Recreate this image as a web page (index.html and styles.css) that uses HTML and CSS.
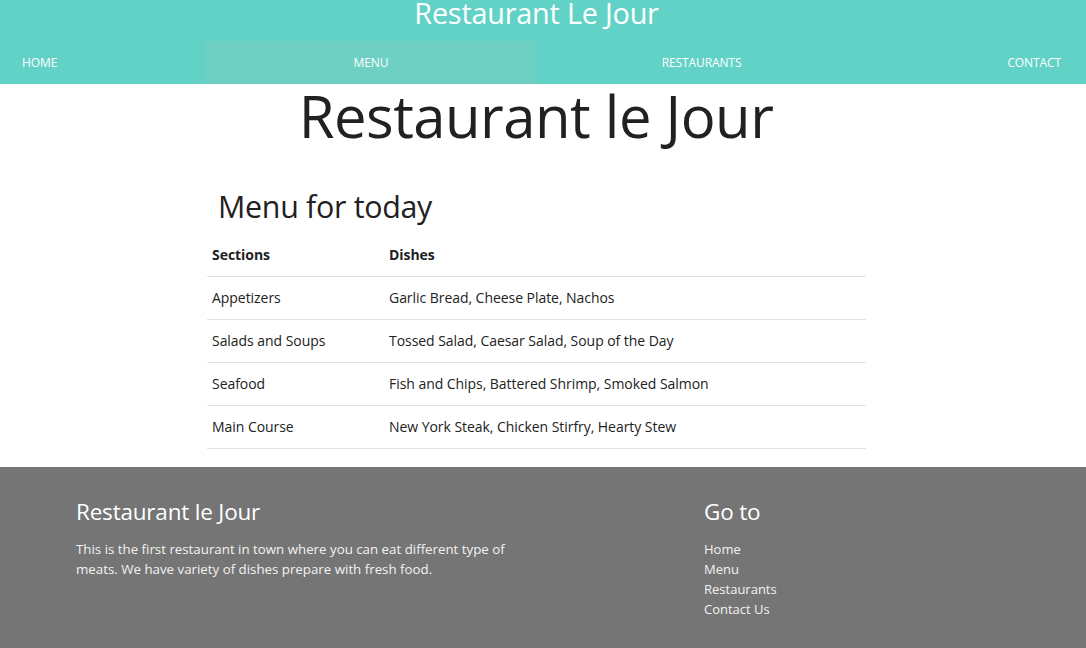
FILE: index.html
```html
<!DOCTYPE html>
<html lang="en">
<head>
<meta charset="utf-8">
<title>Restaurant Le Jour</title>
<link rel="stylesheet" href="styles.css">
</head>
<body>
<header class="site-header">
  <div class="brand">Restaurant Le Jour</div>
  <nav class="nav">
    <a class="nav-item nav-home" href="#">HOME</a>
    <a class="nav-item nav-active" href="#">MENU</a>
    <a class="nav-item" href="#">RESTAURANTS</a>
    <a class="nav-item nav-contact" href="#">CONTACT</a>
  </nav>
</header>
<main class="main">
  <h1 class="page-title">Restaurant le Jour</h1>
  <section class="menu">
    <h2 class="menu-title">Menu for today</h2>
    <table class="menu-table">
      <thead>
        <tr><th class="col-sec">Sections</th><th>Dishes</th></tr>
      </thead>
      <tbody>
        <tr><td>Appetizers</td><td>Garlic Bread, Cheese Plate, Nachos</td></tr>
        <tr><td>Salads and Soups</td><td>Tossed Salad, Caesar Salad, Soup of the Day</td></tr>
        <tr><td>Seafood</td><td>Fish and Chips, Battered Shrimp, Smoked Salmon</td></tr>
        <tr><td>Main Course</td><td>New York Steak, Chicken Stirfry, Hearty Stew</td></tr>
      </tbody>
    </table>
  </section>
</main>
<footer class="footer">
  <div class="footer-about">
    <h3 class="footer-title">Restaurant le Jour</h3>
    <p class="footer-text">This is the first restaurant in town where you can eat different type of meats. We have variety of dishes prepare with fresh food.</p>
  </div>
  <div class="footer-links">
    <h3 class="footer-title">Go to</h3>
    <ul class="link-list">
      <li><a href="#">Home</a></li>
      <li><a href="#">Menu</a></li>
      <li><a href="#">Restaurants</a></li>
      <li><a href="#">Contact Us</a></li>
    </ul>
  </div>
</footer>
</body>
</html>
```

FILE: styles.css
```css
* { box-sizing: border-box; }
html, body { margin: 0; padding: 0; }
body {
  font-family: "Open Sans", "Noto Sans", sans-serif;
  color: #212529;
  background: #fff;
  width: 1086px;
  height: 648px;
  overflow: hidden;
  display: flex;
  flex-direction: column;
}
a { color: inherit; text-decoration: none; }

.site-header { background: #62d2c7; color: #fff; }
.brand {
  height: 41px;
  text-align: center;
  font-size: 28.8px;
  line-height: 26px;
  padding: 0 13px 0 0;
  font-weight: 400;
  letter-spacing: -0.2px;
}
.nav {
  display: grid;
  grid-template-columns: 205px 332px 329px 1fr;
  height: 43px;
}
.nav-item {
  display: flex;
  align-items: center;
  justify-content: center;
  font-size: 12px;
  letter-spacing: -0.1px;
}
.nav-home { justify-content: flex-start; padding-left: 22px; }
.nav-contact { justify-content: flex-end; padding-right: 25px; }
.nav-active { background: #6ecfc3; }

.main { flex: 1; }
.page-title {
  margin: 0;
  padding-right: 14px;
  text-align: center;
  font-size: 58px;
  font-weight: 400;
  line-height: 64px;
  color: #212121;
  letter-spacing: -0.5px;
}
.menu {
  width: 659px;
  margin-left: 207px;
  padding-top: 38px;
}
.menu-title {
  margin: 0 0 6px 11px;
  font-size: 30.4px;
  font-weight: 400;
  line-height: 42px;
  color: #212121;
  letter-spacing: -0.3px;
}
.menu-table {
  width: 100%;
  border-collapse: collapse;
  font-size: 14px;
  letter-spacing: -0.05px;
  color: #222;
}
.menu-table th, .menu-table td {
  text-align: left;
  padding: 0 5px;
  height: 43px;
  vertical-align: middle;
}
.menu-table th { font-weight: 700; height: 42px; }
.menu-table tbody td { border-top: 1px solid #dee2e6; }
.menu-table tbody tr:last-child td { border-bottom: 1px solid #dee2e6; }
.col-sec { width: 177px; }

.footer {
  background: #757575;
  color: #fff;
  height: 181px;
  display: grid;
  grid-template-columns: 628px 1fr;
  padding: 30px 0 0 76px;
}
.footer-title {
  margin: 0 0 12px 0;
  font-size: 22.5px;
  font-weight: 400;
  line-height: 30px;
  letter-spacing: -0.2px;
}
.footer-text {
  margin: 0;
  width: 440px;
  font-size: 13.3px;
  line-height: 20px;
  color: #f2f2f2;
}
.link-list {
  list-style: none;
  margin: 0;
  padding: 0;
  font-size: 13px;
  line-height: 20px;
  color: #f2f2f2;
}
```
